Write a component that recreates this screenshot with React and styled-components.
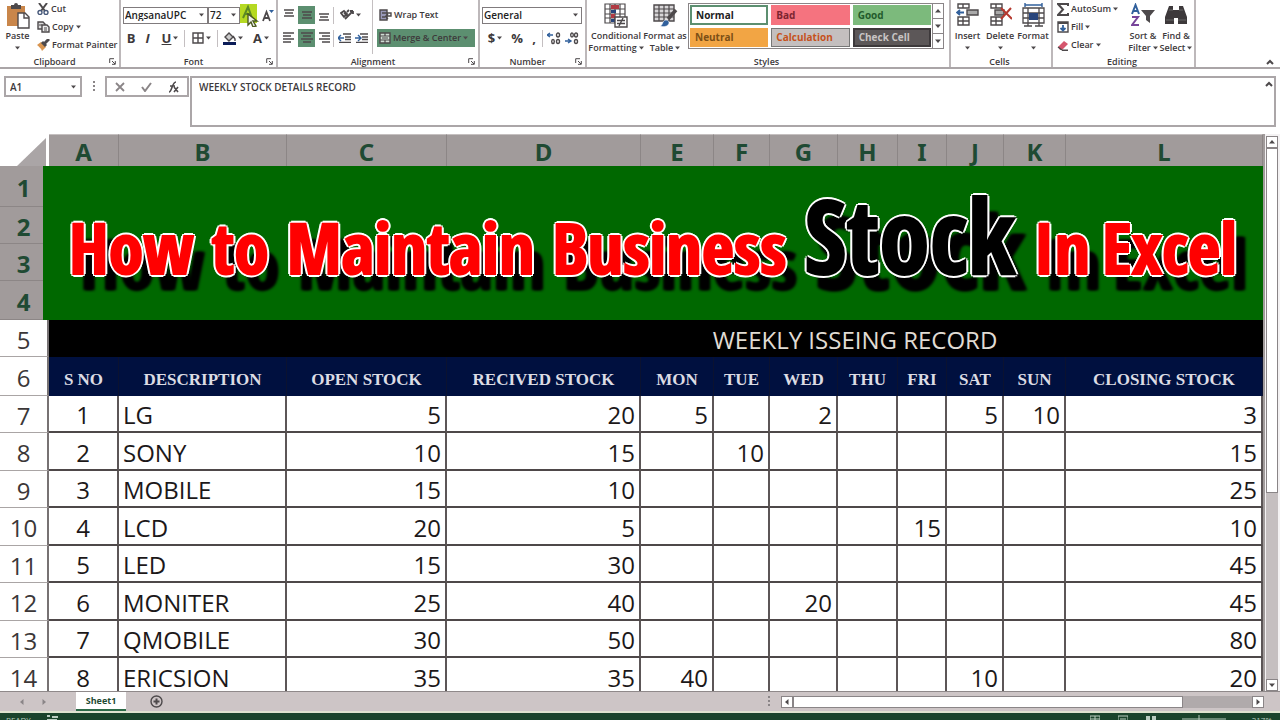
import React from 'react';
import styled, { createGlobalStyle } from 'styled-components';

const Global = createGlobalStyle`
  *, *::before, *::after { box-sizing: border-box; }
  html, body { margin: 0; }
  body { background: #fff; color: #3d393b; font: 600 10px/12px "Open Sans", "Noto Sans", sans-serif; overflow: hidden; }
  button, input, select { font: inherit; color: inherit; margin: 0; padding: 0; border: 0; border-radius: 0; background: none; }
  svg { display: block; flex: none; }
  h1 { margin: 0; }
`;

const Window = styled.div`
  display: flex;
  flex-direction: column;
  height: 100vh;
`;

/* ---------- Ribbon ---------- */
const Ribbon = styled.header`
  display: flex;
  height: 69px;
  flex: none;
  border-bottom: 2px solid #aaa5a7;
`;

const Group = styled.section`
  display: flex;
  flex-direction: column;
  flex: none;
  width: ${(p) => p.$w}px;
  height: 67px;
  border-right: 2px solid #bdb8ba;
`;

const GroupBody = styled.div`
  display: flex;
  flex: 1;
  gap: ${(p) => p.$gap || 0}px;
  padding: ${(p) => p.$pad || '0'};
`;

const GroupLabel = styled.footer`
  display: flex;
  align-items: center;
  height: 11px;
  flex: none;
  font-size: 9px;
  padding-right: 3px;
  span { flex: 1; text-align: center; }
`;

const Stack = styled.div`
  display: flex;
  flex-direction: column;
  gap: ${(p) => p.$gap || 0}px;
  padding-top: ${(p) => p.$top || 0}px;
`;

const Row = styled.div`
  display: flex;
  align-items: center;
  height: 18px;
`;

const Tool = styled.button`
  display: flex;
  flex: none;
  align-items: center;
  justify-content: ${(p) => (p.$wide ? 'flex-start' : 'center')};
  gap: 2px;
  height: 18px;
  width: ${(p) => (p.$w ? p.$w + 'px' : 'auto')};
  && {
    background: ${(p) => (p.$on ? '#5c8f70' : 'transparent')};
    padding: ${(p) => (p.$wide ? '0 2px' : '0')};
    font-size: 9px;
  }
  white-space: nowrap;
`;

const BigTool = styled.button`
  display: flex;
  flex: none;
  flex-direction: column;
  align-items: center;
  width: ${(p) => p.$w}px;
  height: 56px;
  white-space: nowrap;
  && { padding-top: 3px; font-size: 9px; }
`;

const BigIcon = styled.span`
  height: 27px;
`;

const BigLine = styled.span`
  display: flex;
  align-items: center;
  gap: 2px;
  height: 12px;
`;

const Glyph = styled.span`
  font-size: 13px;
  font-weight: 700;
  font-style: ${(p) => (p.$i ? 'italic' : 'normal')};
  text-decoration: ${(p) => (p.$u ? 'underline' : 'none')};
`;

const Divider = styled.i`
  width: 1px;
  height: ${(p) => p.$h || 17}px;
  background: #c4bfc1;
`;

const Combo = styled.label`
  display: flex;
  align-items: center;
  width: ${(p) => p.$w}px;
  height: 17px;
  border: 1px solid #807b7d;
  padding: 0 3px 0 1px;
  select { flex: 1; min-width: 0; appearance: none; outline: none; color: #222; }
`;

const Gallery = styled.div`
  display: flex;
  width: 256px;
  height: 46px;
  border: 1px solid #8a8587;
`;

const StyleGrid = styled.div`
  display: grid;
  grid-template-columns: repeat(3, 1fr);
  gap: 3px;
  flex: 1;
  padding: 1px;
`;

const StyleCell = styled.button`
  text-align: left;
  && {
    background: ${(p) => p.$bg};
    color: ${(p) => p.$fg};
    border: ${(p) => p.$bd || '1px solid transparent'};
    padding: 0 4px;
    font-weight: 700;
  }
`;

const GalleryArrows = styled.div`
  display: flex;
  flex-direction: column;
  width: 11px;
  border-left: 1px solid #8a8587;
  button { display: flex; flex: 1; align-items: center; justify-content: center; }
  button + button { border-top: 1px solid #8a8587; }
`;

const Collapse = styled.button`
  && { margin: auto 6px 2px auto; }
`;

/* ---------- Formula bar ---------- */
const FormulaBar = styled.div`
  display: flex;
  flex: none;
  align-items: flex-start;
  height: 65px;
  padding: 7px 4px 0;
`;

const NameBox = styled.label`
  display: flex;
  align-items: center;
  width: 78px;
  height: 21px;
  border: 2px solid #aba6a8;
  padding: 0 4px;
  input { flex: 1; min-width: 0; outline: none; }
`;

const Grip = styled.span`
  display: flex;
  justify-content: center;
  width: 23px;
  padding-top: 5px;
`;

const FormulaButtons = styled.div`
  display: flex;
  align-items: center;
  justify-content: space-around;
  width: 84px;
  height: 21px;
  margin-right: 1px;
  border: 2px solid #aba6a8;
`;

const FormulaField = styled.label`
  display: flex;
  align-items: flex-start;
  flex: 1;
  height: 51px;
  border: 2px solid #aba6a8;
  padding: 3px 1px 0 7px;
  input { flex: 1; min-width: 0; outline: none; }
`;

/* ---------- Sheet ---------- */
const Work = styled.main`
  display: flex;
  flex: 1;
  min-height: 0;
`;

const SheetArea = styled.div`
  flex: 1;
  min-width: 0;
  overflow: hidden;
`;

const Table = styled.table`
  width: 100%;
  table-layout: fixed;
  border-collapse: separate;
  border-spacing: 0;
  font-size: 24px;
  line-height: 28px;
  font-weight: 500;
  color: #1c1819;
  th, td { padding: 3px 0 0; white-space: nowrap; }
`;

const ColHead = styled.th`
  height: 32px;
  background: #a19b9b;
  border-right: 1px solid #8c8686;
  border-top: 1px solid #c5c0c0;
  color: #1f4a33;
  font: 700 24px/28px "Noto Sans", sans-serif;
`;

const Corner = styled.th`
  border-right: 1px solid #fff;
  svg { margin-left: auto; }
`;

const RowHead = styled.th`
  height: ${(p) => p.$h}px;
  font-weight: ${(p) => (p.$on ? 700 : 500)};
  font-family: ${(p) => (p.$on ? '"Noto Sans"' : '"Open Sans"')}, sans-serif;
  color: ${(p) => (p.$on ? '#1f4a33' : '#3b3738')};
  background: ${(p) => (p.$on ? '#a19b9b' : '#fff')};
  border-bottom: 1px solid ${(p) => (p.$on ? '#8c8686' : '#aaa5a5')};
  border-right: 2px solid ${(p) => (p.$on ? '#a19b9b' : '#777273')};
`;

const BannerCell = styled.td`
  && { padding: 0; }
`;

const Banner = styled.h1`
  position: relative;
  display: flex;
  align-items: baseline;
  justify-content: space-between;
  height: 154px;
  margin-left: -6px;
  padding: 24px 26px 0;
  background: #006800;
  font: 700 70px/90px Impact, "Open Sans Condensed", "Roboto Condensed", "Liberation Sans Narrow", sans-serif;
`;

const Phrase = styled.span`
  display: flex;
  align-items: baseline;
  gap: 12px;
`;

const Word = styled.span`
  color: ${(p) => (p.$big ? '#000' : '#f00')};
  font-size: ${(p) => (p.$big ? 102 : 70)}px;
  -webkit-text-stroke: 2px ${(p) => (p.$big ? '#000' : '#f00')};
  text-shadow: 3px 0 #fff, -3px 0 #fff, 0 3px #fff, 0 -3px #fff, 2px 2px #fff, -2px 2px #fff,
    2px -2px #fff, -2px -2px #fff, 10px 16px 3px #000, 12px 16px 3px #000;
`;

const TitleCell = styled.td`
  background: #000;
  color: #e0dcd4;
  font-weight: 400;
  text-align: center;
`;

const FieldHead = styled.th`
  background: #00103f;
  color: #dcdce4;
  border-right: 1px solid #0b1230;
  font: 700 17px/20px "Liberation Serif", serif;
  && { padding-top: 6px; }
`;

const Cell = styled.td`
  text-align: ${(p) => p.$align || 'right'};
  border-right: 2px solid #5c5657;
  border-bottom: 2px solid #4e4849;
  && { padding: 3px 4px 0; }
`;

const VScroll = styled.div`
  display: flex;
  flex-direction: column;
  align-items: center;
  width: 17px;
  padding-top: 2px;
  background: linear-gradient(90deg, #a19b9b 0 2px, #f4f2f3 2px);
`;

const ScrollButton = styled.button`
  display: flex;
  align-items: center;
  justify-content: center;
  flex: none;
  width: 12px;
  height: 12px;
  && { border: 1px solid #8a8587; background: #fff; }
`;

const VTrack = styled.div`
  flex: 1;
  width: 12px;
  background: #c5bfc0;
`;

const VThumb = styled.div`
  height: 65%;
  background: #fff;
  border: 1px solid #8a8587;
`;

/* ---------- Bottom bars ---------- */
const TabBar = styled.nav`
  display: flex;
  flex: none;
  height: 22px;
  background: #cdc5c6;
  border-top: 1px solid #8f898a;
  border-bottom: 2px solid #dfe3cf;
`;

const TabArrows = styled.div`
  display: flex;
  align-items: center;
  justify-content: center;
  gap: 16px;
  width: 76px;
  padding-right: 10px;
`;

const SheetTab = styled.button`
  width: 50px;
  height: 19px;
  && {
    background: #fff;
    border-bottom: 2px solid #2c6a47;
    color: #1f4a33;
    font-weight: 700;
    font-size: 9px;
  }
`;

const AddSheet = styled.button`
  display: flex;
  align-items: center;
  && { margin-left: 24px; }
`;

const HScroll = styled.div`
  display: flex;
  align-items: center;
  width: 40%;
  margin-left: auto;
  padding-right: 16px;
`;

const TabGrip = styled.span`
  width: 13px;
`;

const HTrack = styled.div`
  flex: 1;
  height: 12px;
  background: #b0aaab;
`;

const HThumb = styled.div`
  width: 85%;
  height: 12px;
  background: #fff;
  border: 1px solid #8a8587;
`;

const StatusBar = styled.footer`
  display: flex;
  flex: none;
  gap: 15px;
  height: 7px;
  padding: 2px 8px 0 6px;
  overflow: hidden;
  background: #1a442b;
  color: #b9cdbf;
  font: 400 8px/9px "Open Sans", sans-serif;
`;

const StatusRight = styled.div`
  display: flex;
  gap: 18px;
  margin-left: auto;
`;

/* ---------- Icons ---------- */
const Svg = ({ w = 14, h = w, children }) => (
  <svg width={w} height={h} viewBox={`0 0 ${w} ${h}`} fill="none" stroke="#4d494b" strokeWidth="1.4" aria-hidden="true">{children}</svg>
);
const Caret = () => <Svg w={5} h={4}><path d="M0 .5h5L2.5 3.5z" fill="#4d494b" stroke="none" /></Svg>;
const Up = () => <Svg w={8} h={6}><path d="M1 5l3-3 3 3" strokeWidth="2" /></Svg>;
const Tri = ({ r = 0, c = '#4d494b' }) => <Svg w={6}><path d="M0 4.5h6L3 1z" fill={c} stroke="none" transform={`rotate(${r} 3 3)`} /></Svg>;
const Launcher = () => <Svg w={7}><path d="M.7 5V.7H5M3 3l3 3M6.3 3v3.3H3" strokeWidth="1" /></Svg>;
const Paste = () => (
  <Svg w={24} h={26}>
    <path d="M1 3h18v20H1z" fill="#c9864a" stroke="none" />
    <path d="M5 2h3a2 2 0 0 1 4 0h3v4H5z" fill="#4d494b" stroke="none" />
    <path d="M12 10h7l4 4v11H12z" fill="#fff" /><path d="M18 10v5h5" />
  </Svg>
);
const Cut = () => <Svg w={12}><path d="M2 0l6 8M10 0L4 8" strokeWidth="2" /><circle cx="3" cy="9.5" r="2" stroke="#46587a" /><circle cx="9" cy="9.5" r="2" stroke="#46587a" /></Svg>;
const Copy = () => <Svg w={13} h={12}><path d="M1 1h5l2 2v5H1z" fill="#ddd" /><path d="M5 4h5l2 2v5H5z" fill="#eee" /><path d="M2 4h3M7 7h3M7 9h3" strokeWidth="1" /></Svg>;
const Painter = () => <Svg w={13} h={12}><path d="M0 6l4-3 5 5-4 4c-1-3-3-4-5-6z" fill="#d9954f" stroke="none" /><path d="M5 3l4 4M7 5l5-5" strokeWidth="3" /></Svg>;
const Lines = ({ d }) => <Svg w={12}><path d={d} strokeWidth="1.3" /></Svg>;
const Borders = () => <Svg w={12}><path d="M1 1h10v10H1zM6 1v10M1 6h10" /></Svg>;
const Bucket = () => <Svg w={13}><path d="M2 5l4-4 4 4-4 4zM10 4l2 3v2" fill="#ccc" /><path d="M0 11.5h13" stroke="#0b1c58" strokeWidth="3" /></Svg>;
const Orient = () => <Svg w={14} h={12}><path d="M1 4l3-2 3 3-3 3zM4 4l4 3M5 10l8-8M13 2v3M13 2h-3M7 3l2-2" strokeWidth="1.8" /></Svg>;
const Indent = ({ out }) => <Svg w={13} h={10}><path d="M5 1h8M7 4h6M7 6.5h6M1 9.3h12" strokeWidth="1.3" /><path d={out ? 'M0 5h6M3 2L0 5l3 3' : 'M0 5h6M3 2l3 3-3 3'} stroke="#31609c" /></Svg>;
const Wrap = () => <Svg w={13} h={12}><path d="M1 1h7v10H1z" fill="#9898b8" /><path d="M3 4h9v3H7M9 5L6.5 7.5 9 10M3 8h3" /></Svg>;
const Merge = () => <Svg w={12}><path d="M1 1h10v10H1z" fill="#cfdcd3" /><path d="M1 4h10M1 8h10M6 1v3M6 8v3M3 6h6" strokeWidth="1.2" /></Svg>;
const Decimal = ({ flip }) => (
  <Svg w={14} h={13}>
    <path d={flip ? 'M0 9h6M3 7l3 2-3 2' : 'M0 3h6M3 1L0 3l3 2'} stroke="#31609c" />
    <ellipse cx="11" cy="3" rx="1.5" ry="2" /><ellipse cx="11" cy="9.5" rx="1.5" ry="2" /><ellipse cx={flip ? 7 : 6} cy={flip ? 3 : 9.5} rx="1.3" ry="2" />
  </Svg>
);
const CondFmt = () => (
  <Svg w={24} h={25}>
    <path d="M1 1h20v19H1zM1 6h20M1 11h20M1 15h20M6 1v19M11 1v19M16 1v19" strokeWidth="1.2" />
    <path d="M7 2h8v4H7zM7 11h4v4H7z" fill="#b03a43" stroke="none" /><path d="M7 7h5v3H7zM7 16h4v3H7z" fill="#28457c" stroke="none" />
    <path d="M11 14h12v10H11z" fill="#fff" /><path d="M13 17.5h8M13 20.5h8M19 15l-4 8" />
  </Svg>
);
const TableFmt = () => (
  <Svg w={25}>
    <path d="M1 2h20v16H1z" fill="#d8d6d8" /><path d="M1 6h20M1 10h20M1 14h20M6 2v16M11 2v16M16 2v16" strokeWidth="1.2" />
    <path d="M23 7l-8 9" strokeWidth="3.5" /><path d="M7 23c3 0 2-6 6-6 3 0 4 3 2 5s-5 2-8 1z" fill="#31609c" stroke="#fff" strokeWidth=".6" />
  </Svg>
);
const CellsIcon = ({ kind }) => (
  <Svg w={23} h={24}>
    {kind === 'format' ? (
      <>
        <path d="M1 5h21v15H1zM1 10h21M1 15h21M6 5v18M17 5v18M2 23h8M13 23h8" strokeWidth="1.3" />
        <path d="M3 2h17M3 0v4M20 0v4" stroke="#31609c" /><path d="M7 10h9v7H7z" fill="#28457c" stroke="none" />
      </>
    ) : (
      <>
        <path d="M2 1h11v4H2zM7 1v4M2 14h11v8H2zM7 14v8M2 18h11" />
        {kind === 'insert' ? (
          <><path d="M11 7h11v5H11z" fill="#aaa" /><path d="M1 9.5h7M4 7L1 9.5 4 12" stroke="#31609c" strokeWidth="1.8" /></>
        ) : (
          <><path d="M6 7h9v5H6z" fill="#aaa" /><path d="M12 5l11 11M22 5L12 16" stroke="#b5392f" strokeWidth="2" /></>
        )}
      </>
    )}
  </Svg>
);
const Sigma = () => <Svg w={12} h={13}><path d="M11 3V1H1l5 5.5L1 12h10v-2" strokeWidth="2" /></Svg>;
const Fill = () => <Svg w={12}><path d="M1 1h10v10H1z" /><path d="M1 2h10" strokeWidth="2" /><path d="M6 4v5M3.5 7L6 9.5 8.5 7" stroke="#31609c" strokeWidth="1.8" /></Svg>;
const Eraser = () => <Svg w={12} h={11}><path d="M1 7l6-6 4 3-6 6H3z" fill="#d5566d" stroke="none" /><path d="M1 7l4 3M5 10.3h6" /></Svg>;
const SortIcon = () => (
  <Svg w={24} h={25}>
    <path d="M1 11L4.5 2 8 11M2.5 8h4" stroke="#31609c" strokeWidth="2" /><path d="M1 14h6l-6 8h7" stroke="#77449a" strokeWidth="2" />
    <path d="M10 7h14l-5 6v7l-4-3v-4z" fill="#4d494b" stroke="none" />
  </Svg>
);
const Binoculars = () => (
  <Svg w={24} h={25}>
    <path d="M5 3h4v4h6V3h4l4 11v7h-9v-6h-4v6H1v-7z" fill="#3d393b" stroke="none" /><path d="M5 7h4M15 7h4M2 17h8M14 17h8" stroke="#666" strokeWidth="1" />
  </Svg>
);
const GrowFont = () => (
  <Svg w={20} h={24}>
    <path d="M0 1h17v19H0z" fill="#b5d922" stroke="none" /><path d="M3 15L8 4l4 11M5 11h6" stroke="#5c8a24" strokeWidth="2" />
    <path d="M8 11v11l3-3 2 5 3-1-3-5h4z" fill="#eee" stroke="#4b5a20" />
  </Svg>
);
const ShrinkFont = () => <Svg w={12} h={14}><path d="M1 13L4.5 4 8 13M2.5 10h4" strokeWidth="1.8" /><path d="M7 2h5L9.5 5z" fill="#31609c" stroke="none" /></Svg>;
const Dots = () => <Svg w={2} h={11}><path d="M1 0v11" strokeWidth="2" strokeDasharray="2 2" stroke="#8a8587" /></Svg>;

/* ---------- Data ---------- */
const COLS = [['A', 70], ['B', 168], ['C', 160], ['D', 194], ['E', 73], ['F', 56], ['G', 68], ['H', 60], ['I', 49], ['J', 57], ['K', 62], ['L', null]];
const FIELDS = ['S NO', 'DESCRIPTION', 'OPEN STOCK', 'RECIVED STOCK', 'MON', 'TUE', 'WED', 'THU', 'FRI', 'SAT', 'SUN', 'CLOSING STOCK'];
const ROWS = [
  [1, 'LG', 5, 20, 5, '', 2, '', '', 5, 10, 3],
  [2, 'SONY', 10, 15, '', 10, '', '', '', '', '', 15],
  [3, 'MOBILE', 15, 10, '', '', '', '', '', '', '', 25],
  [4, 'LCD', 20, 5, '', '', '', '', 15, '', '', 10],
  [5, 'LED', 15, 30, '', '', '', '', '', '', '', 45],
  [6, 'MONITER', 25, 40, '', '', 20, '', '', '', '', 45],
  [7, 'QMOBILE', 30, 50, '', '', '', '', '', '', '', 80],
  [8, 'ERICSION', 35, 35, 40, '', '', '', '', 10, '', 20],
];
const STYLES = [
  ['Normal', '#fff', '#222', '2px solid #5c8f70'],
  ['Bad', '#f5737f', '#7c2430'],
  ['Good', '#7cba7c', '#245c2c'],
  ['Neutral', '#f2a544', '#7c4f16'],
  ['Calculation', '#c4bfbf', '#c6521c', '1px solid #777'],
  ['Check Cell', '#5c5758', '#c8c4c4', '2px solid #3d393b'],
];

const Big = ({ w, icon, a, b }) => (
  <BigTool $w={w}><BigIcon>{icon}</BigIcon><BigLine>{a}</BigLine><BigLine>{b}<Caret /></BigLine></BigTool>
);

export default function App() {
  return (
    <Window>
      <Global />
      <Ribbon>
        <Group $w={121}>
          <GroupBody>
            <Big w={35} icon={<Paste />} a="Paste" />
            <Stack>
              <Tool $wide><Cut />Cut</Tool>
              <Tool $wide><Copy />Copy<Caret /></Tool>
              <Tool $wide><Painter />Format Painter</Tool>
            </Stack>
          </GroupBody>
          <GroupLabel><span>Clipboard</span><Launcher /></GroupLabel>
        </Group>

        <Group $w={157}>
          <GroupBody $pad="0 0 0 2px">
            <Stack $top={6} $gap={5}>
              <Row>
                <Combo $w={85}><select aria-label="Font"><option>AngsanaUPC</option></select><Caret /></Combo>
                <Combo $w={32}><select aria-label="Font size"><option>72</option></select><Caret /></Combo>
                <Tool $w={20} aria-label="Increase font size"><GrowFont /></Tool>
                <Tool $w={16} aria-label="Decrease font size"><ShrinkFont /></Tool>
              </Row>
              <Row>
                <Tool $w={16}><Glyph>B</Glyph></Tool>
                <Tool $w={17}><Glyph $i>I</Glyph></Tool>
                <Tool $w={28}><Glyph $u>U</Glyph><Caret /></Tool>
                <Divider />
                <Tool $w={32} aria-label="Borders"><Borders /><Caret /></Tool>
                <Divider />
                <Tool $w={30} aria-label="Fill colour"><Bucket /><Caret /></Tool>
                <Tool $w={26}><Glyph>A</Glyph><Caret /></Tool>
              </Row>
            </Stack>
          </GroupBody>
          <GroupLabel><span>Font</span><Launcher /></GroupLabel>
        </Group>

        <Group $w={202}>
          <GroupBody $gap={4} $pad="0 0 0 2px">
            <Stack $top={6} $gap={5}>
              <Row>
                <Tool $w={18} aria-label="Top align"><Lines d="M1 1h10M2 4h8M1 7h10" /></Tool>
                <Tool $w={17} $on aria-label="Middle align"><Lines d="M1 3h10M2 6h8M1 9h10" /></Tool>
                <Tool $w={18} aria-label="Bottom align"><Lines d="M1 5h10M2 8h8M1 11h10" /></Tool>
                <Divider />
                <Tool $w={32} aria-label="Orientation"><Orient /><Caret /></Tool>
              </Row>
              <Row>
                <Tool $w={18} aria-label="Align left"><Lines d="M0 1h11M0 4h8M0 7h11M0 10h8" /></Tool>
                <Tool $w={17} $on aria-label="Center"><Lines d="M0 1h12M2 4h8M0 7h12M2 10h8" /></Tool>
                <Tool $w={18} aria-label="Align right"><Lines d="M1 1h11M4 4h8M1 7h11M4 10h8" /></Tool>
                <Divider />
                <Tool $w={20} aria-label="Decrease indent"><Indent out /></Tool>
                <Tool $w={14} aria-label="Increase indent"><Indent /></Tool>
              </Row>
            </Stack>
            <Divider $h={54} />
            <Stack $top={6} $gap={5}>
              <Tool $wide><Wrap />Wrap Text</Tool>
              <Tool $wide $on $w={98}><Merge />Merge &amp; Center<Caret /></Tool>
            </Stack>
          </GroupBody>
          <GroupLabel><span>Alignment</span><Launcher /></GroupLabel>
        </Group>

        <Group $w={107}>
          <GroupBody $pad="0 0 0 2px">
            <Stack $top={6} $gap={5}>
              <Row><Combo $w={100}><select aria-label="Number format"><option>General</option></select><Caret /></Combo></Row>
              <Row>
                <Tool $w={26}><Glyph>$</Glyph><Caret /></Tool>
                <Tool $w={18}><Glyph>%</Glyph></Tool>
                <Tool $w={16}><Glyph>,</Glyph></Tool>
                <Divider />
                <Tool $w={22} aria-label="Increase decimal"><Decimal /></Tool>
                <Tool $w={14} aria-label="Decrease decimal"><Decimal flip /></Tool>
              </Row>
            </Stack>
          </GroupBody>
          <GroupLabel><span>Number</span><Launcher /></GroupLabel>
        </Group>

        <Group $w={364}>
          <GroupBody $pad="0 0 0 3px">
            <Big w={52} icon={<CondFmt />} a="Conditional" b="Formatting" />
            <Big w={46} icon={<TableFmt />} a="Format as" b="Table" />
            <Stack $top={3}>
              <Gallery>
                <StyleGrid>
                  {STYLES.map(([n, bg, fg, bd]) => <StyleCell key={n} $bg={bg} $fg={fg} $bd={bd}>{n}</StyleCell>)}
                </StyleGrid>
                <GalleryArrows>
                  <button aria-label="Previous styles"><Tri /></button>
                  <button aria-label="Next styles"><Tri r={180} /></button>
                  <button aria-label="More styles"><Tri r={180} /></button>
                </GalleryArrows>
              </Gallery>
            </Stack>
          </GroupBody>
          <GroupLabel><span>Styles</span></GroupLabel>
        </Group>

        <Group $w={102}>
          <GroupBody>
            <Big w={33} icon={<CellsIcon kind="insert" />} a="Insert" />
            <Big w={32} icon={<CellsIcon kind="delete" />} a="Delete" />
            <Big w={34} icon={<CellsIcon kind="format" />} a="Format" />
          </GroupBody>
          <GroupLabel><span>Cells</span></GroupLabel>
        </Group>

        <Group $w={143}>
          <GroupBody $pad="0 0 0 2px">
            <Stack>
              <Tool $wide $w={72}><Sigma />AutoSum<Caret /></Tool>
              <Tool $wide><Fill />Fill<Caret /></Tool>
              <Tool $wide><Eraser />Clear<Caret /></Tool>
            </Stack>
            <Big w={32} icon={<SortIcon />} a="Sort &amp;" b="Filter" />
            <Big w={34} icon={<Binoculars />} a="Find &amp;" b="Select" />
          </GroupBody>
          <GroupLabel><span>Editing</span></GroupLabel>
        </Group>
        <Collapse aria-label="Collapse the ribbon"><Up /></Collapse>
      </Ribbon>

      <FormulaBar>
        <NameBox><input aria-label="Name box" defaultValue="A1" /><Caret /></NameBox>
        <Grip><Dots /></Grip>
        <FormulaButtons>
          <button aria-label="Cancel"><Svg w={10}><path d="M1 1l8 8M9 1L1 9" strokeWidth="1.8" stroke="#8a8587" /></Svg></button>
          <button aria-label="Enter"><Svg w={11} h={10}><path d="M1 5l3 4 6-8" strokeWidth="2" stroke="#8a8587" /></Svg></button>
          <button aria-label="Insert function"><Svg w={11} h={12}><path d="M1 11c3 0 3-10 7-10M2 5h5M6 6l4 5M10 6l-4 5" strokeWidth="1.6" /></Svg></button>
        </FormulaButtons>
        <FormulaField><input aria-label="Formula" defaultValue="WEEKLY STOCK DETAILS RECORD" /><Up /></FormulaField>
      </FormulaBar>

      <Work>
        <SheetArea>
          <Table>
            <colgroup>
              <col style={{ width: 49 }} />
              {COLS.map(([n, w]) => <col key={n} style={w ? { width: w } : undefined} />)}
            </colgroup>
            <thead>
              <tr>
                <Corner><Svg w={31} h={28}><path d="M0 28L29 0v28z" fill="#aaa5a6" stroke="none" /></Svg></Corner>
                {COLS.map(([n]) => <ColHead key={n} scope="col">{n}</ColHead>)}
              </tr>
            </thead>
            <tbody>
              <tr>
                <RowHead $on $h={41} scope="row">1</RowHead>
                <BannerCell colSpan={12} rowSpan={4}>
                  <Banner>
                    <Word>How</Word><Word>to</Word><Word>Maintain</Word><Word>Business</Word><Word $big>Stock</Word>
                    <Phrase><Word>In</Word><Word>Excel</Word></Phrase>
                  </Banner>
                </BannerCell>
              </tr>
              <tr><RowHead $on $h={37} scope="row">2</RowHead></tr>
              <tr><RowHead $on $h={37} scope="row">3</RowHead></tr>
              <tr><RowHead $on $h={39} scope="row">4</RowHead></tr>
              <tr>
                <RowHead $h={37} scope="row">5</RowHead>
                <TitleCell colSpan={3} />
                <TitleCell colSpan={9}>WEEKLY ISSEING RECORD</TitleCell>
              </tr>
              <tr>
                <RowHead $h={39} scope="row">6</RowHead>
                {FIELDS.map((f) => <FieldHead key={f} scope="col">{f}</FieldHead>)}
              </tr>
              {ROWS.map((r, i) => (
                <tr key={r[0]}>
                  <RowHead $h={i % 2 ? 38 : 37} scope="row">{i + 7}</RowHead>
                  {r.map((v, j) => <Cell key={j} $align={j === 0 ? 'center' : j === 1 ? 'left' : 'right'}>{v}</Cell>)}
                </tr>
              ))}
            </tbody>
          </Table>
        </SheetArea>
        <VScroll>
          <ScrollButton aria-label="Scroll up"><Tri /></ScrollButton>
          <VTrack><VThumb /></VTrack>
          <ScrollButton aria-label="Scroll down"><Tri r={180} /></ScrollButton>
        </VScroll>
      </Work>

      <TabBar>
        <TabArrows><Tri r={-90} c="#8a8587" /><Tri r={90} c="#8a8587" /></TabArrows>
        <SheetTab>Sheet1</SheetTab>
        <AddSheet aria-label="New sheet"><Svg w={13}><circle cx="6.5" cy="6.5" r="5.5" /><path d="M6.5 3.5v6M3.5 6.5h6" strokeWidth="2" /></Svg></AddSheet>
        <HScroll>
          <TabGrip><Dots /></TabGrip>
          <ScrollButton aria-label="Scroll left"><Tri r={-90} /></ScrollButton>
          <HTrack><HThumb /></HTrack>
          <ScrollButton aria-label="Scroll right"><Tri r={90} /></ScrollButton>
        </HScroll>
      </TabBar>
      <StatusBar>
        <span>READY</span>
        <Svg w={12} h={8}><path d="M1 1h3M6 2h6M1 5h10" stroke="#b9cdbf" strokeWidth="2" /></Svg>
        <StatusRight>
          <Svg w={10} h={8}><path d="M0 1h10v7H0zM5 1v7M0 4h10" stroke="#b9cdbf" strokeWidth="1" /></Svg>
          <Svg w={10} h={8}><path d="M0 1h10v7H0zM2 4h6" stroke="#b9cdbf" strokeWidth="1" /></Svg>
          <Svg w={10} h={8}><path d="M0 1h4v4H0zM6 1h4v4H6z" fill="#b9cdbf" stroke="none" /></Svg>
          <Svg w={60} h={8}><path d="M8 4h44M25 0v8" stroke="#b9cdbf" strokeWidth="1" /></Svg>
          <span>217%</span>
        </StatusRight>
      </StatusBar>
    </Window>
  );
}
